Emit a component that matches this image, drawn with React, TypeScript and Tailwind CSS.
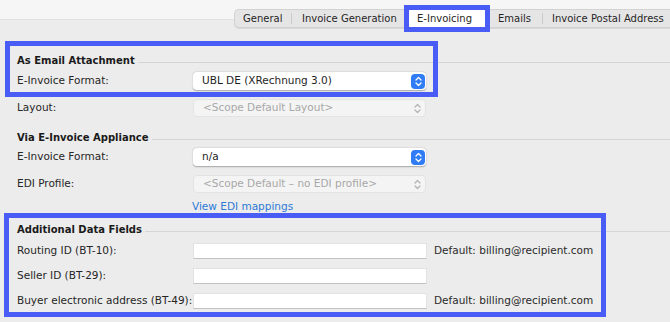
import React from "react";

const font = { fontFamily: '"DejaVu Sans", "Liberation Sans", sans-serif' };

function Stepper({ active }: { active: boolean }) {
  return (
    <span
      className={
        "flex items-center justify-center w-[14px] h-[15px] rounded-[4px] " +
        (active ? "bg-[#2f7cf6]" : "bg-transparent")
      }
    >
      <svg width="7" height="11" viewBox="0 0 7 11" fill="none">
        <path
          d="M1 4 L3.5 1.5 L6 4 M1 7 L3.5 9.5 L6 7"
          stroke={active ? "#ffffff" : "#b4b4b4"}
          strokeWidth="1.3"
          strokeLinecap="round"
          strokeLinejoin="round"
        />
      </svg>
    </span>
  );
}

function Popup({ value, disabled }: { value: string; disabled?: boolean }) {
  return (
    <div
      className={
        "flex items-center justify-between w-[233px] h-[18px] rounded-[4px] pl-[9px] pr-[1px] " +
        (disabled
          ? "bg-[#f4f4f4] text-[#a8a8a8] border border-[#e3e3e3]"
          : "bg-white text-[#1e1e1e] shadow-[0_0.5px_1.5px_rgba(0,0,0,0.3)]")
      }
    >
      <span className="whitespace-nowrap">{value}</span>
      <Stepper active={!disabled} />
    </div>
  );
}

function Heading({ title }: { title: string }) {
  return (
    <div className="flex items-center h-[14px] pl-[17px]">
      <span className="font-bold text-[10px] text-[#1a1a1a] whitespace-nowrap">{title}</span>
      <span className="flex-1 h-px bg-[#d5d5d5] ml-[3px] mt-[4px]" />
    </div>
  );
}

function Row({ label, children, className }: { label: string; children: React.ReactNode; className?: string }) {
  return (
    <div className={"flex items-center pl-[17px] " + (className ?? "")}>
      <span className="w-[176px] whitespace-nowrap text-[#262626]">{label}</span>
      {children}
    </div>
  );
}

function Field() {
  return <div className="w-[234px] h-[16px] bg-white border border-[#e2e2e2] border-b-[#c3c3c3]" />;
}

function Sep() {
  return <span className="w-px h-[11px] bg-[#cbcbcb]" />;
}

export default function App() {
  return (
    <div className="relative w-[670px] h-[322px] overflow-hidden bg-[#ececec] text-[10.5px]" style={font}>
      <div className="h-[20px] bg-[#f6f6f6] border-b border-[#e2e2e2]" />

      <div className="-mt-[11px] flex pl-[234px] whitespace-nowrap text-[10px]">
        <div className="flex flex-1 items-center h-[19px] rounded-l-[5px] border border-r-0 border-[#d2d2d2] bg-[#e5e5e5] shadow-[0_1px_0_#d8d8d8] text-[#262626]">
          <span className="w-[56px] pl-[8px]">General</span>
          <Sep />
          <span className="w-[112px] pl-[10px]">Invoice Generation</span>
          <span className="w-[86px] h-[17px] flex items-center pl-[13px] bg-white">E-Invoicing</span>
          <span className="w-[52px] pl-[8px]">Emails</span>
          <Sep />
          <span className="pl-[9px]">Invoice Postal Address</span>
        </div>
      </div>

      <div className="mt-[25px]">
        <Heading title="As Email Attachment" />
        <Row label="E-Invoice Format:" className="mt-[5px] h-[18px]">
          <Popup value="UBL DE (XRechnung 3.0)" />
        </Row>
        <Row label="Layout:" className="mt-[9px] h-[18px]">
          <Popup value="<Scope Default Layout>" disabled />
        </Row>

        <div className="mt-[13px]">
          <Heading title="Via E-Invoice Appliance" />
        </div>
        <Row label="E-Invoice Format:" className="mt-[4px] h-[18px]">
          <Popup value="n/a" />
        </Row>
        <Row label="EDI Profile:" className="mt-[9px] h-[18px]">
          <Popup value="<Scope Default – no EDI profile>" disabled />
        </Row>
        <div className="mt-[7px] h-[14px] flex items-center pl-[192px]">
          <span className="text-[#2d7ad6] whitespace-nowrap">View EDI mappings</span>
        </div>

        <div className="mt-[8px]">
          <Heading title="Additional Data Fields" />
        </div>
        <Row label="Routing ID (BT-10):" className="mt-[7px] h-[16px]">
          <Field />
          <span className="ml-[7px] whitespace-nowrap text-[#2a2a2a]">Default: billing@recipient.com</span>
        </Row>
        <Row label="Seller ID (BT-29):" className="mt-[9px] h-[16px]">
          <Field />
        </Row>
        <Row label="Buyer electronic address (BT-49):" className="mt-[9px] h-[16px]">
          <Field />
          <span className="ml-[7px] whitespace-nowrap text-[#2a2a2a]">Default: billing@recipient.com</span>
        </Row>
      </div>

      {/* annotation highlights drawn over the form */}
      <div className="absolute left-[404px] top-[5px] w-[86px] h-[27px] border-[5px] border-[#4a5cf6] pointer-events-none" />
      <div className="absolute left-[5px] top-[41px] w-[433px] h-[56px] border-[5px] border-[#4a5cf6] pointer-events-none" />
      <div className="absolute left-[4px] top-[213px] w-[602px] h-[104px] border-[5px] border-[#4a5cf6] pointer-events-none" />
    </div>
  );
}
